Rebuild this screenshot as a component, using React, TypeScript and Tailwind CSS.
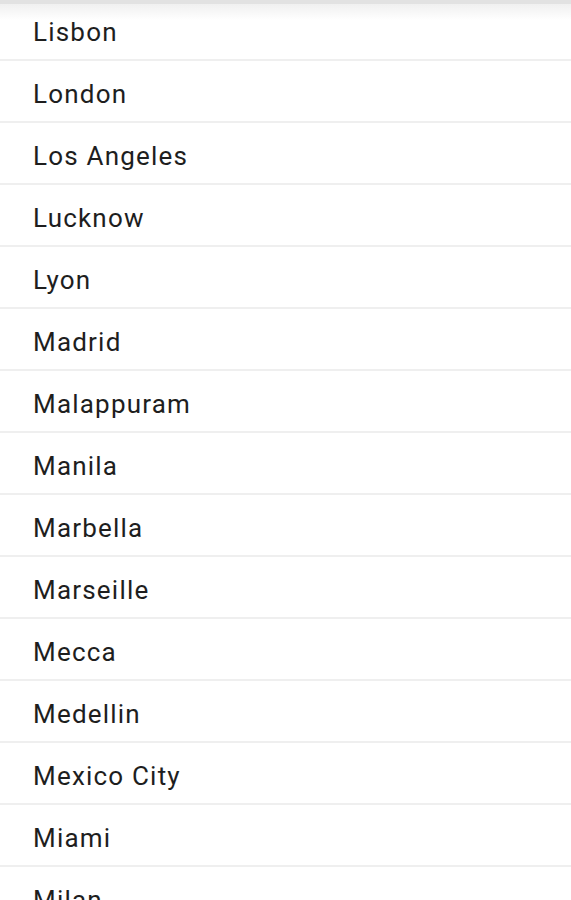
import React from "react";

const cities = [
  "Lisbon",
  "London",
  "Los Angeles",
  "Lucknow",
  "Lyon",
  "Madrid",
  "Malappuram",
  "Manila",
  "Marbella",
  "Marseille",
  "Mecca",
  "Medellin",
  "Mexico City",
  "Miami",
  "Milan",
];

export default function App() {
  return (
    <div className="relative h-[900px] w-[571px] overflow-hidden bg-white" style={{ fontFamily: "Roboto, 'Noto Sans', sans-serif" }}>
      <div className="absolute left-0 right-0 top-0 z-10 h-[4px] bg-[#e2e2e2]" />
      <div className="absolute left-0 right-0 top-[4px] z-10 h-[16px] bg-gradient-to-b from-[#f0f0f0] to-transparent" />
      <div className="-mt-[1px] flex flex-col">
        {cities.map((c) => (
          <div key={c} className="flex flex-col">
            <div className="flex h-[60px] items-center pl-[33px] pt-[6px] text-[26px] tracking-[1.2px] text-[#1e1e1e]">{c}</div>
            <div className="h-[2px] bg-[#efefef]" />
          </div>
        ))}
      </div>
    </div>
  );
}
